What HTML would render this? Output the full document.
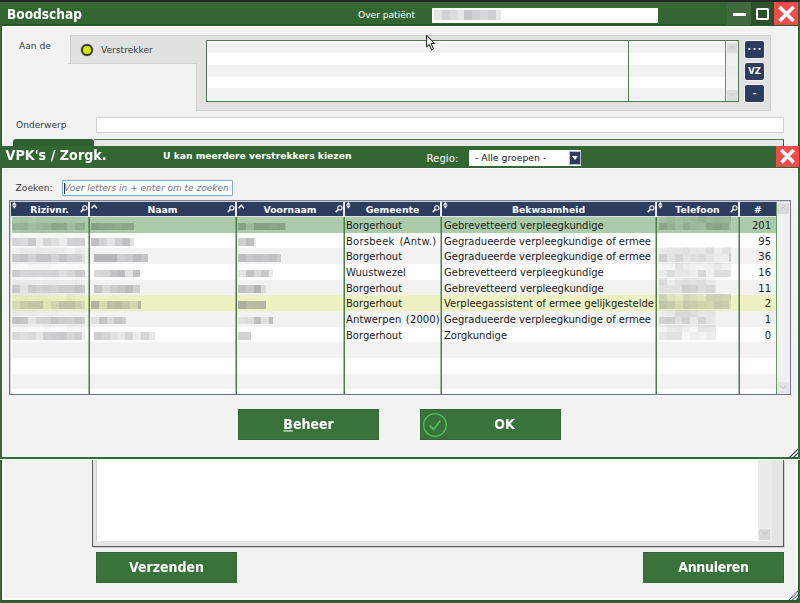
<!DOCTYPE html>
<html><head><meta charset="utf-8"><title>Boodschap</title>
<style>
*{box-sizing:border-box;margin:0;padding:0}
html,body{width:800px;height:603px;overflow:hidden;background:#386b38;font-family:"DejaVu Sans","Liberation Sans",sans-serif;font-size:10px;color:#222}
div,svg,span{position:absolute}
.lbl{font-size:9.1px;color:#3a3a3a;line-height:14px;white-space:nowrap}
.btn{background:#39723a;color:#fff;font-weight:bold;font-size:12.6px;text-align:center;border:1px solid #33683a;white-space:nowrap}
.nb{background:#2d3d5f;border-radius:2px;box-shadow:0 0 0 1px #f3f3f3;color:#fff;font-weight:bold;font-size:9px;text-align:center;width:19px;height:17px;line-height:16px}
.th{top:201.5px;height:14.5px;background:#2d3d5f;color:#fff;font-weight:bold;font-size:9.3px;line-height:15.2px;text-align:center;white-space:nowrap}
.td{height:16px;line-height:17px;font-size:10px;color:#1c1c1c;white-space:nowrap;overflow:hidden}
.sep{top:217px;width:2px;height:177px;background:linear-gradient(90deg,rgba(76,124,76,0.5) 0 1px,#4c7c4c 1px 2px)}
.bt{position:static;display:inline-block;transform:scaleY(1.07)}
.bl{filter:blur(0.45px)}
</style></head><body>
<div style="left:0;top:0;width:800px;height:2px;background:#26282a"></div>
<div style="left:0;top:2px;width:800px;height:23px;background:#336633"></div>
<div style="left:7px;top:6px;font-weight:bold;font-size:12.2px;color:#fff;line-height:18px;transform:scaleY(1.08)">Boodschap</div>
<div class="lbl" style="left:358px;top:8px;color:#fff">Over patiënt</div>
<div style="left:432px;top:8px;width:226px;height:15px;background:#fff"></div>
<div class="bl" style="left:434px;top:9.5px;width:67px;height:10.5px;background:linear-gradient(90deg,#e8e4e4 0 8px,#d2d2d6 8px 16px,#dcdce0 16px 24px,#e6e6e6 24px 30px,#c8c6ca 30px 38px,#d0d0d4 38px 46px,#d8d8dc 46px 54px,#cfcfd3 54px 62px,#e6e6ea 62px)"></div>
<div style="left:727px;top:2px;width:24px;height:23px;background:#41693f;z-index:2"></div>
<div style="left:732.5px;top:12.5px;width:13px;height:3px;background:#fff;z-index:3"></div>
<div style="left:751px;top:2px;width:23px;height:23px;background:#2b502b;z-index:2"></div>
<div style="left:756px;top:8px;width:13px;height:12px;border:2px solid #fff;border-radius:1.5px;z-index:3"></div>
<div style="left:774px;top:2px;width:24px;height:23px;background:#f24b4b;z-index:2"></div>
<svg style="left:775px;top:2px;z-index:3" width="22" height="22"><path d="M4.5 5 L18.5 19 M18.5 5 L4.5 19" stroke="#fff" stroke-width="3.6"/></svg>
<div style="left:1px;top:24px;width:798px;height:577.5px;background:#275927"></div>
<div style="left:2px;top:26px;width:796px;height:574px;background:#fff"></div>
<div style="left:4px;top:27px;width:792px;height:571px;background:#f2f2f2"></div>
<div class="lbl" style="left:19px;top:39px">Aan de</div>
<div style="left:70px;top:35px;width:701px;height:75.5px;background:#e1e1e1;border:1px solid #cfcfcf"></div>
<div style="left:68px;top:63px;width:129px;height:49px;background:#f2f2f2;border-top:1px solid #cfcfcf;border-right:1px solid #cfcfcf"></div>
<div style="left:81px;top:44px;width:12px;height:12px;border-radius:50%;background:#d2ee00;border:2px solid #3e3f2a;box-shadow:0 0 1px #55583a"></div>
<div class="lbl" style="left:101px;top:43px">Verstrekker</div>
<div style="left:206px;top:40px;width:533px;height:62px;background:#fff;border:1px solid #4d7d4d"></div>
<div style="left:208px;top:42.5px;width:530px;height:10px;background:#f2f2f2"></div>
<div style="left:208px;top:64.5px;width:530px;height:12px;background:#f2f2f2"></div>
<div style="left:208px;top:88px;width:530px;height:12px;background:#f2f2f2"></div>
<div style="left:628px;top:41px;width:1px;height:60px;background:#4d7d4d"></div>
<div style="left:725px;top:41px;width:1px;height:60px;background:#6a976a"></div>
<div style="left:726px;top:41px;width:12px;height:60px;background:rgba(236,236,236,0.75)"></div>
<div style="left:727px;top:42.5px;width:10px;height:10px;background:#dadada"></div>
<div style="left:727px;top:90px;width:10px;height:10.5px;background:#dcdcdc"></div>
<div class="nb" style="left:745px;top:41px;letter-spacing:1.6px;font-size:5.5px;text-indent:1.6px">•••</div>
<div class="nb" style="left:745px;top:63px;font-size:8.4px">VZ</div>
<div class="nb" style="left:745px;top:85px">-</div>
<div class="lbl" style="left:16px;top:118px">Onderwerp</div>
<div style="left:96px;top:117px;width:688px;height:16px;background:#fff;border:1px solid #d0d0d0"></div>
<div style="left:13px;top:139px;width:81px;height:8px;background:#2f5f30;border-radius:3px 3px 0 0"></div>
<div style="left:94px;top:139px;width:690px;height:8px;background:#e6e9e6;border-top:1px solid #4d7d4d;border-right:1px solid #4a4f4a"></div>
<div style="left:92px;top:455px;width:692px;height:92px;background:#e3e6e3;border:1px solid #5a5a5a;box-shadow:0.5px 0.5px 0 rgba(90,90,90,0.4)"></div>
<div style="left:96px;top:455px;width:662px;height:85.5px;background:#fff;border-left:1px solid #d0d0d0"></div>
<div style="left:758px;top:455px;width:13.5px;height:85.5px;background:#ececec"></div>
<div style="left:759px;top:528.5px;width:11px;height:11px;background:#d9d9d9"></div>
<div class="btn" style="left:96px;top:552px;width:141px;height:31px;line-height:29px"><span class="bt">Verzenden</span></div>
<div class="btn" style="left:643px;top:552px;width:141px;height:31px;line-height:29px"><span class="bt" style="letter-spacing:-0.3px">Annuleren</span></div>
<div style="left:0;top:146px;width:800px;height:314px;background:#fff"></div>
<div style="left:0;top:146px;width:800px;height:313px;background:#35693a"></div>
<div style="left:0;top:146px;width:800px;height:21.5px;background:#336633"></div>
<div style="left:1.6px;top:168px;width:796.8px;height:289px;background:#fff"></div>
<div style="left:3px;top:169px;width:794px;height:287px;background:#f2f2f2"></div>
<div style="left:5.5px;top:148px;font-weight:bold;font-size:12.8px;color:#fff;line-height:16px;transform:scaleY(1.12);white-space:nowrap">VPK's / Zorgk.</div>
<div style="left:163px;top:149px;font-weight:bold;font-size:9.2px;color:#fff;line-height:13px;white-space:nowrap">U kan meerdere verstrekkers kiezen</div>
<div class="lbl" style="left:426.5px;top:152px;color:#fff;font-size:10.2px">Regio:</div>
<div style="left:469px;top:150px;width:112px;height:16px;background:#fff"></div>
<div style="left:475px;top:151px;font-size:9.3px;line-height:13px;color:#222;white-space:nowrap">- Alle groepen -</div>
<div style="left:569px;top:151px;width:12px;height:14px;background:#2d3d5f;border:1px solid #b8bfd4"></div>
<div style="left:572px;top:156px;width:0;height:0;border:3px solid transparent;border-top:4px solid #fff"></div>
<div style="left:776px;top:146px;width:23px;height:21px;background:#f24b4b"></div>
<svg style="left:776px;top:146px" width="24" height="22"><path d="M5.3 4.1 L17.7 16.5 M17.7 4.1 L5.3 16.5" stroke="#fff" stroke-width="3.6"/></svg>
<div class="lbl" style="left:15.5px;top:181px;font-size:9.2px">Zoeken:</div>
<div style="left:62px;top:180px;width:171px;height:16px;background:#fff;border:1px solid #7fabe0;border-radius:1px;box-shadow:0 0 1px #9cc0ea"></div>
<div style="left:64px;top:183px;width:1px;height:11px;background:#333"></div>
<div style="left:64px;top:182px;font-size:9px;line-height:13px;font-style:italic;color:#6f7680;white-space:nowrap">Voer letters in + enter om te zoeken</div>
<div style="left:9px;top:200px;width:782px;height:195px;background:#fff;border:1px solid #6a7590;border-top:1.5px solid #7a8296;box-shadow:inset 0 0 0 1px rgba(106,117,144,0.35)"></div>
<div style="left:12px;top:217px;width:764px;height:16px;background:#accbab"></div>
<div style="left:12px;top:233px;width:764px;height:15px;background:#ffffff"></div>
<div style="left:12px;top:248px;width:764px;height:16px;background:#f2f2f2"></div>
<div style="left:12px;top:264px;width:764px;height:16px;background:#ffffff"></div>
<div style="left:12px;top:280px;width:764px;height:15px;background:#f2f2f2"></div>
<div style="left:12px;top:295px;width:764px;height:16px;background:#eef2c2"></div>
<div style="left:12px;top:311px;width:764px;height:16px;background:#f2f2f2"></div>
<div style="left:12px;top:327px;width:764px;height:15px;background:#ffffff"></div>
<div style="left:12px;top:342px;width:764px;height:16px;background:#f2f2f2"></div>
<div style="left:12px;top:358px;width:764px;height:16px;background:#ffffff"></div>
<div style="left:12px;top:374px;width:764px;height:15px;background:#f2f2f2"></div>
<div style="left:12px;top:389px;width:764px;height:5px;background:#ffffff"></div>
<div class="th" style="left:11px;width:77px">Rizivnr.</div>
<svg style="left:12.4px;top:202.4px" width="5" height="7"><path d="M2.3 0 L4.6 2.8 L0 2.8Z M0 3.6 L4.6 3.6 L2.3 6.4Z" fill="#fff"/></svg>
<svg style="left:79.5px;top:205px" width="8" height="8"><circle cx="4.9" cy="2.9" r="2.1" stroke="#fff" stroke-width="1.1" fill="none"/><path d="M3.3 4.5 L0.7 7.1" stroke="#fff" stroke-width="1.5"/></svg>
<div class="th" style="left:90px;width:145px">Naam</div>
<svg style="left:91.2px;top:204.3px" width="8" height="6"><path d="M0.6 4.2 L3.3 1.2 L6 4.2" stroke="#fff" stroke-width="1.3" fill="none"/></svg>
<svg style="left:226.5px;top:205px" width="8" height="8"><circle cx="4.9" cy="2.9" r="2.1" stroke="#fff" stroke-width="1.1" fill="none"/><path d="M3.3 4.5 L0.7 7.1" stroke="#fff" stroke-width="1.5"/></svg>
<div class="th" style="left:237px;width:106px">Voornaam</div>
<svg style="left:238.2px;top:204.3px" width="8" height="6"><path d="M0.6 4.2 L3.3 1.2 L6 4.2" stroke="#fff" stroke-width="1.3" fill="none"/></svg>
<svg style="left:334.5px;top:205px" width="8" height="8"><circle cx="4.9" cy="2.9" r="2.1" stroke="#fff" stroke-width="1.1" fill="none"/><path d="M3.3 4.5 L0.7 7.1" stroke="#fff" stroke-width="1.5"/></svg>
<div class="th" style="left:345px;width:95px">Gemeente</div>
<svg style="left:346.4px;top:202.4px" width="5" height="7"><path d="M2.3 0 L4.6 2.8 L0 2.8Z M0 3.6 L4.6 3.6 L2.3 6.4Z" fill="#fff"/></svg>
<svg style="left:431.5px;top:205px" width="8" height="8"><circle cx="4.9" cy="2.9" r="2.1" stroke="#fff" stroke-width="1.1" fill="none"/><path d="M3.3 4.5 L0.7 7.1" stroke="#fff" stroke-width="1.5"/></svg>
<div class="th" style="left:442px;width:213px">Bekwaamheid</div>
<svg style="left:443.4px;top:202.4px" width="5" height="7"><path d="M2.3 0 L4.6 2.8 L0 2.8Z M0 3.6 L4.6 3.6 L2.3 6.4Z" fill="#fff"/></svg>
<svg style="left:646.5px;top:205px" width="8" height="8"><circle cx="4.9" cy="2.9" r="2.1" stroke="#fff" stroke-width="1.1" fill="none"/><path d="M3.3 4.5 L0.7 7.1" stroke="#fff" stroke-width="1.5"/></svg>
<div class="th" style="left:657px;width:81px">Telefoon</div>
<svg style="left:658.4px;top:202.4px" width="5" height="7"><path d="M2.3 0 L4.6 2.8 L0 2.8Z M0 3.6 L4.6 3.6 L2.3 6.4Z" fill="#fff"/></svg>
<svg style="left:729.5px;top:205px" width="8" height="8"><circle cx="4.9" cy="2.9" r="2.1" stroke="#fff" stroke-width="1.1" fill="none"/><path d="M3.3 4.5 L0.7 7.1" stroke="#fff" stroke-width="1.5"/></svg>
<div class="th" style="left:740px;width:36px">#</div>
<div style="left:88px;top:201.5px;width:2px;height:14.5px;background:#e8ebf0"></div><div class="sep" style="left:88px"></div>
<div style="left:235px;top:201.5px;width:2px;height:14.5px;background:#e8ebf0"></div><div class="sep" style="left:235px"></div>
<div style="left:343px;top:201.5px;width:2px;height:14.5px;background:#e8ebf0"></div><div class="sep" style="left:343px"></div>
<div style="left:440px;top:201.5px;width:2px;height:14.5px;background:#e8ebf0"></div><div class="sep" style="left:440px"></div>
<div style="left:655px;top:201.5px;width:2px;height:14.5px;background:#e8ebf0"></div><div class="sep" style="left:655px"></div>
<div style="left:738px;top:201.5px;width:2px;height:14.5px;background:#e8ebf0"></div><div class="sep" style="left:738px"></div>
<div style="left:11px;top:216px;width:765px;height:1px;background:#dfe3e8"></div>
<div style="left:776px;top:202px;width:14px;height:192px;background:#f0f0f0;border-left:1px solid #6a976a"></div>
<div style="left:777px;top:203px;width:12px;height:11px;background:#dadada"></div>
<div style="left:777px;top:382px;width:12px;height:11px;background:#e4e4e4"></div>
<svg style="left:780px;top:206px" width="6" height="5"><path d="M0.5 3.5 L3 1 L5.5 3.5" stroke="#c4c4c4" stroke-width="1" fill="none"/></svg><svg style="left:780px;top:385px" width="6" height="5"><path d="M0.5 1 L3 3.5 L5.5 1" stroke="#c4c4c4" stroke-width="1" fill="none"/></svg><svg style="left:729px;top:45px" width="6" height="5"><path d="M0.5 3.5 L3 1 L5.5 3.5" stroke="#c4c4c4" stroke-width="1" fill="none"/></svg><svg style="left:729px;top:92px" width="6" height="5"><path d="M0.5 1 L3 3.5 L5.5 1" stroke="#c4c4c4" stroke-width="1" fill="none"/></svg><svg style="left:762px;top:531px" width="6" height="5"><path d="M0.5 1 L3 3.5 L5.5 1" stroke="#c4c4c4" stroke-width="1" fill="none"/></svg>
<div class="td" style="left:346px;top:217px;width:95px">Borgerhout</div><div class="td" style="left:444px;top:217px;width:211px">Gebrevetteerd verpleegkundige</div><div class="td" style="left:741px;top:217px;width:30px;text-align:right">201</div>
<div class="bl" style="left:12.3px;top:222.6px;width:73.2px;height:7.8px;background:linear-gradient(90deg,rgba(100,122,100,0.29) 0.0px 7.8px,rgba(100,122,100,0.31) 7.8px 15.6px,rgba(100,122,100,0.16) 15.6px 23.5px,rgba(100,122,100,0.24) 23.5px 31.3px,rgba(100,122,100,0.29) 31.3px 39.1px,rgba(100,122,100,0.44) 39.1px 46.9px,rgba(100,122,100,0.41) 46.9px 54.7px,rgba(100,122,100,0.17) 54.7px 62.6px,rgba(100,122,100,0.37) 62.6px 70.4px,rgba(100,122,100,0.34) 70.4px 78.2px)"></div><div class="bl" style="left:12.3px;top:214.8px;width:73.2px;height:7.8px;background:linear-gradient(90deg,rgba(100,122,100,0.03) 0.0px 7.8px,rgba(100,122,100,0.08) 7.8px 15.6px,rgba(100,122,100,0.02) 15.6px 23.5px,rgba(100,122,100,0.08) 23.5px 31.3px,rgba(100,122,100,0.07) 31.3px 39.1px,rgba(100,122,100,0.07) 39.1px 46.9px,rgba(100,122,100,0.05) 46.9px 54.7px,rgba(100,122,100,0.06) 54.7px 62.6px,rgba(100,122,100,0.04) 62.6px 70.4px,rgba(100,122,100,0.04) 70.4px 78.2px)"></div><div class="bl" style="left:90.5px;top:222.6px;width:43.0px;height:7.8px;background:linear-gradient(90deg,rgba(100,122,100,0.54) 0.0px 7.8px,rgba(100,122,100,0.46) 7.8px 15.6px,rgba(100,122,100,0.43) 15.6px 23.5px,rgba(100,122,100,0.39) 23.5px 31.3px,rgba(100,122,100,0.45) 31.3px 39.1px,rgba(100,122,100,0.47) 39.1px 46.9px)"></div><div class="bl" style="left:238.1px;top:222.6px;width:47.7px;height:7.8px;background:linear-gradient(90deg,rgba(100,122,100,0.51) 0.0px 7.8px,rgba(100,122,100,0.21) 7.8px 15.6px,rgba(100,122,100,0.52) 15.6px 23.5px,rgba(100,122,100,0.53) 23.5px 31.3px,rgba(100,122,100,0.48) 31.3px 39.1px,rgba(100,122,100,0.51) 39.1px 46.9px,rgba(100,122,100,0.17) 46.9px 54.7px)"></div><div class="bl" style="left:658.8px;top:222.6px;width:72.2px;height:7.8px;background:linear-gradient(90deg,rgba(100,122,100,0.47) 0.0px 7.8px,rgba(100,122,100,0.32) 7.8px 15.6px,rgba(100,122,100,0.17) 15.6px 23.5px,rgba(100,122,100,0.36) 23.5px 31.3px,rgba(100,122,100,0.21) 31.3px 39.1px,rgba(100,122,100,0.19) 39.1px 46.9px,rgba(100,122,100,0.44) 46.9px 54.7px,rgba(100,122,100,0.48) 54.7px 62.6px,rgba(100,122,100,0.40) 62.6px 70.4px,rgba(100,122,100,0.16) 70.4px 78.2px)"></div><div class="bl" style="left:658.8px;top:215.6px;width:72.2px;height:7.0px;background:linear-gradient(90deg,rgba(100,122,100,0.13) 0.0px 7.8px,rgba(100,122,100,0.21) 7.8px 15.6px,rgba(100,122,100,0.13) 15.6px 23.5px,rgba(100,122,100,0.19) 23.5px 31.3px,rgba(100,122,100,0.23) 31.3px 39.1px,rgba(100,122,100,0.33) 39.1px 46.9px,rgba(100,122,100,0.26) 46.9px 54.7px,rgba(100,122,100,0.29) 54.7px 62.6px,rgba(100,122,100,0.28) 62.6px 70.4px,rgba(100,122,100,0.34) 70.4px 78.2px)"></div>
<div class="td" style="left:346px;top:233px;width:95px;word-spacing:1.5px;letter-spacing:0.23px">Borsbeek (Antw.)</div><div class="td" style="left:444px;top:233px;width:211px">Gegradueerde verpleegkundige of ermee</div><div class="td" style="left:741px;top:233px;width:30px;text-align:right">95</div>
<div class="bl" style="left:12.3px;top:238.2px;width:73.2px;height:7.8px;background:linear-gradient(90deg,rgba(118,118,124,0.30) 0.0px 7.8px,rgba(118,118,124,0.27) 7.8px 15.6px,rgba(118,118,124,0.40) 15.6px 23.5px,rgba(118,118,124,0.14) 23.5px 31.3px,rgba(118,118,124,0.30) 31.3px 39.1px,rgba(118,118,124,0.23) 39.1px 46.9px,rgba(118,118,124,0.15) 46.9px 54.7px,rgba(118,118,124,0.33) 54.7px 62.6px,rgba(118,118,124,0.34) 62.6px 70.4px,rgba(118,118,124,0.35) 70.4px 78.2px)"></div><div class="bl" style="left:12.3px;top:230.4px;width:73.2px;height:7.8px;background:linear-gradient(90deg,rgba(118,118,124,0.01) 0.0px 7.8px,rgba(118,118,124,0.07) 7.8px 15.6px,rgba(118,118,124,0.05) 15.6px 23.5px,rgba(118,118,124,0.07) 23.5px 31.3px,rgba(118,118,124,0.05) 31.3px 39.1px,rgba(118,118,124,0.05) 39.1px 46.9px,rgba(118,118,124,0.05) 46.9px 54.7px,rgba(118,118,124,0.03) 54.7px 62.6px,rgba(118,118,124,0.06) 62.6px 70.4px,rgba(118,118,124,0.05) 70.4px 78.2px)"></div><div class="bl" style="left:90.5px;top:238.2px;width:43.0px;height:7.8px;background:linear-gradient(90deg,rgba(118,118,124,0.46) 0.0px 7.8px,rgba(118,118,124,0.32) 7.8px 15.6px,rgba(118,118,124,0.20) 15.6px 23.5px,rgba(118,118,124,0.35) 23.5px 31.3px,rgba(118,118,124,0.46) 31.3px 39.1px,rgba(118,118,124,0.21) 39.1px 46.9px)"></div><div class="bl" style="left:238.1px;top:238.2px;width:17.7px;height:7.8px;background:linear-gradient(90deg,rgba(118,118,124,0.35) 0.0px 7.8px,rgba(118,118,124,0.47) 7.8px 15.6px,rgba(118,118,124,0.15) 15.6px 23.5px)"></div>
<div class="td" style="left:346px;top:248px;width:95px">Borgerhout</div><div class="td" style="left:444px;top:248px;width:211px">Gegradueerde verpleegkundige of ermee</div><div class="td" style="left:741px;top:248px;width:30px;text-align:right">36</div>
<div class="bl" style="left:12.3px;top:253.9px;width:73.2px;height:7.8px;background:linear-gradient(90deg,rgba(118,118,124,0.32) 0.0px 7.8px,rgba(118,118,124,0.37) 7.8px 15.6px,rgba(118,118,124,0.26) 15.6px 23.5px,rgba(118,118,124,0.37) 23.5px 31.3px,rgba(118,118,124,0.37) 31.3px 39.1px,rgba(118,118,124,0.25) 39.1px 46.9px,rgba(118,118,124,0.36) 46.9px 54.7px,rgba(118,118,124,0.28) 54.7px 62.6px,rgba(118,118,124,0.30) 62.6px 70.4px,rgba(118,118,124,0.17) 70.4px 78.2px)"></div><div class="bl" style="left:12.3px;top:246.1px;width:73.2px;height:7.8px;background:linear-gradient(90deg,rgba(118,118,124,0.03) 0.0px 7.8px,rgba(118,118,124,0.08) 7.8px 15.6px,rgba(118,118,124,0.06) 15.6px 23.5px,rgba(118,118,124,0.09) 23.5px 31.3px,rgba(118,118,124,0.07) 31.3px 39.1px,rgba(118,118,124,0.07) 39.1px 46.9px,rgba(118,118,124,0.05) 46.9px 54.7px,rgba(118,118,124,0.02) 54.7px 62.6px,rgba(118,118,124,0.07) 62.6px 70.4px,rgba(118,118,124,0.04) 70.4px 78.2px)"></div><div class="bl" style="left:94.4px;top:253.9px;width:54.1px;height:7.8px;background:linear-gradient(90deg,rgba(118,118,124,0.48) 0.0px 7.8px,rgba(118,118,124,0.48) 7.8px 15.6px,rgba(118,118,124,0.48) 15.6px 23.5px,rgba(118,118,124,0.28) 23.5px 31.3px,rgba(118,118,124,0.32) 31.3px 39.1px,rgba(118,118,124,0.43) 39.1px 46.9px,rgba(118,118,124,0.37) 46.9px 54.7px)"></div><div class="bl" style="left:238.1px;top:253.9px;width:42.7px;height:7.8px;background:linear-gradient(90deg,rgba(118,118,124,0.41) 0.0px 7.8px,rgba(118,118,124,0.34) 7.8px 15.6px,rgba(118,118,124,0.38) 15.6px 23.5px,rgba(118,118,124,0.36) 23.5px 31.3px,rgba(118,118,124,0.40) 31.3px 39.1px,rgba(118,118,124,0.32) 39.1px 46.9px)"></div><div class="bl" style="left:658.8px;top:253.9px;width:72.2px;height:7.8px;background:linear-gradient(90deg,rgba(118,118,124,0.28) 0.0px 7.8px,rgba(118,118,124,0.12) 7.8px 15.6px,rgba(118,118,124,0.23) 15.6px 23.5px,rgba(118,118,124,0.11) 23.5px 31.3px,rgba(118,118,124,0.15) 31.3px 39.1px,rgba(118,118,124,0.18) 39.1px 46.9px,rgba(118,118,124,0.11) 46.9px 54.7px,rgba(118,118,124,0.05) 54.7px 62.6px,rgba(118,118,124,0.06) 62.6px 70.4px,rgba(118,118,124,0.29) 70.4px 78.2px)"></div><div class="bl" style="left:658.8px;top:246.9px;width:72.2px;height:7.0px;background:linear-gradient(90deg,rgba(118,118,124,0.07) 0.0px 7.8px,rgba(118,118,124,0.11) 7.8px 15.6px,rgba(118,118,124,0.11) 15.6px 23.5px,rgba(118,118,124,0.15) 23.5px 31.3px,rgba(118,118,124,0.09) 31.3px 39.1px,rgba(118,118,124,0.08) 39.1px 46.9px,rgba(118,118,124,0.17) 46.9px 54.7px,rgba(118,118,124,0.03) 54.7px 62.6px,rgba(118,118,124,0.12) 62.6px 70.4px,rgba(118,118,124,0.18) 70.4px 78.2px)"></div>
<div class="td" style="left:346px;top:264px;width:95px">Wuustwezel</div><div class="td" style="left:444px;top:264px;width:211px">Gebrevetteerd verpleegkundige</div><div class="td" style="left:741px;top:264px;width:30px;text-align:right">16</div>
<div class="bl" style="left:12.3px;top:269.6px;width:73.2px;height:7.8px;background:linear-gradient(90deg,rgba(118,118,124,0.37) 0.0px 7.8px,rgba(118,118,124,0.30) 7.8px 15.6px,rgba(118,118,124,0.31) 15.6px 23.5px,rgba(118,118,124,0.30) 23.5px 31.3px,rgba(118,118,124,0.31) 31.3px 39.1px,rgba(118,118,124,0.32) 39.1px 46.9px,rgba(118,118,124,0.24) 46.9px 54.7px,rgba(118,118,124,0.30) 54.7px 62.6px,rgba(118,118,124,0.39) 62.6px 70.4px,rgba(118,118,124,0.38) 70.4px 78.2px)"></div><div class="bl" style="left:12.3px;top:261.8px;width:73.2px;height:7.8px;background:linear-gradient(90deg,rgba(118,118,124,0.05) 0.0px 7.8px,rgba(118,118,124,0.04) 7.8px 15.6px,rgba(118,118,124,0.07) 15.6px 23.5px,rgba(118,118,124,0.08) 23.5px 31.3px,rgba(118,118,124,0.07) 31.3px 39.1px,rgba(118,118,124,0.04) 39.1px 46.9px,rgba(118,118,124,0.01) 46.9px 54.7px,rgba(118,118,124,0.03) 54.7px 62.6px,rgba(118,118,124,0.02) 62.6px 70.4px,rgba(118,118,124,0.04) 70.4px 78.2px)"></div><div class="bl" style="left:94.4px;top:269.6px;width:46.1px;height:7.8px;background:linear-gradient(90deg,rgba(118,118,124,0.29) 0.0px 7.8px,rgba(118,118,124,0.31) 7.8px 15.6px,rgba(118,118,124,0.43) 15.6px 23.5px,rgba(118,118,124,0.49) 23.5px 31.3px,rgba(118,118,124,0.21) 31.3px 39.1px,rgba(118,118,124,0.45) 39.1px 46.9px)"></div><div class="bl" style="left:238.1px;top:269.6px;width:34.7px;height:7.8px;background:linear-gradient(90deg,rgba(118,118,124,0.20) 0.0px 7.8px,rgba(118,118,124,0.44) 7.8px 15.6px,rgba(118,118,124,0.29) 15.6px 23.5px,rgba(118,118,124,0.40) 23.5px 31.3px,rgba(118,118,124,0.15) 31.3px 39.1px)"></div><div class="bl" style="left:658.8px;top:269.6px;width:72.2px;height:7.8px;background:linear-gradient(90deg,rgba(118,118,124,0.15) 0.0px 7.8px,rgba(118,118,124,0.25) 7.8px 15.6px,rgba(118,118,124,0.17) 15.6px 23.5px,rgba(118,118,124,0.17) 23.5px 31.3px,rgba(118,118,124,0.12) 31.3px 39.1px,rgba(118,118,124,0.29) 39.1px 46.9px,rgba(118,118,124,0.11) 46.9px 54.7px,rgba(118,118,124,0.24) 54.7px 62.6px,rgba(118,118,124,0.23) 62.6px 70.4px,rgba(118,118,124,0.20) 70.4px 78.2px)"></div><div class="bl" style="left:658.8px;top:262.6px;width:72.2px;height:7.0px;background:linear-gradient(90deg,rgba(118,118,124,0.09) 0.0px 7.8px,rgba(118,118,124,0.07) 7.8px 15.6px,rgba(118,118,124,0.20) 15.6px 23.5px,rgba(118,118,124,0.13) 23.5px 31.3px,rgba(118,118,124,0.09) 31.3px 39.1px,rgba(118,118,124,0.09) 39.1px 46.9px,rgba(118,118,124,0.11) 46.9px 54.7px,rgba(118,118,124,0.16) 54.7px 62.6px,rgba(118,118,124,0.10) 62.6px 70.4px,rgba(118,118,124,0.12) 70.4px 78.2px)"></div>
<div class="td" style="left:346px;top:280px;width:95px">Borgerhout</div><div class="td" style="left:444px;top:280px;width:211px">Gebrevetteerd verpleegkundige</div><div class="td" style="left:741px;top:280px;width:30px;text-align:right">11</div>
<div class="bl" style="left:12.3px;top:285.2px;width:73.2px;height:7.8px;background:linear-gradient(90deg,rgba(118,118,124,0.33) 0.0px 7.8px,rgba(118,118,124,0.12) 7.8px 15.6px,rgba(118,118,124,0.31) 15.6px 23.5px,rgba(118,118,124,0.25) 23.5px 31.3px,rgba(118,118,124,0.28) 31.3px 39.1px,rgba(118,118,124,0.25) 39.1px 46.9px,rgba(118,118,124,0.31) 46.9px 54.7px,rgba(118,118,124,0.31) 54.7px 62.6px,rgba(118,118,124,0.37) 62.6px 70.4px,rgba(118,118,124,0.31) 70.4px 78.2px)"></div><div class="bl" style="left:12.3px;top:277.4px;width:73.2px;height:7.8px;background:linear-gradient(90deg,rgba(118,118,124,0.08) 0.0px 7.8px,rgba(118,118,124,0.07) 7.8px 15.6px,rgba(118,118,124,0.06) 15.6px 23.5px,rgba(118,118,124,0.04) 23.5px 31.3px,rgba(118,118,124,0.07) 31.3px 39.1px,rgba(118,118,124,0.08) 39.1px 46.9px,rgba(118,118,124,0.04) 46.9px 54.7px,rgba(118,118,124,0.04) 54.7px 62.6px,rgba(118,118,124,0.08) 62.6px 70.4px,rgba(118,118,124,0.05) 70.4px 78.2px)"></div><div class="bl" style="left:94.4px;top:285.2px;width:46.1px;height:7.8px;background:linear-gradient(90deg,rgba(118,118,124,0.35) 0.0px 7.8px,rgba(118,118,124,0.20) 7.8px 15.6px,rgba(118,118,124,0.30) 15.6px 23.5px,rgba(118,118,124,0.34) 23.5px 31.3px,rgba(118,118,124,0.41) 31.3px 39.1px,rgba(118,118,124,0.28) 39.1px 46.9px)"></div><div class="bl" style="left:238.1px;top:285.2px;width:27.7px;height:7.8px;background:linear-gradient(90deg,rgba(118,118,124,0.38) 0.0px 7.8px,rgba(118,118,124,0.33) 7.8px 15.6px,rgba(118,118,124,0.49) 15.6px 23.5px,rgba(118,118,124,0.18) 23.5px 31.3px)"></div><div class="bl" style="left:658.8px;top:285.2px;width:57.2px;height:7.8px;background:linear-gradient(90deg,rgba(118,118,124,0.15) 0.0px 7.8px,rgba(118,118,124,0.12) 7.8px 15.6px,rgba(118,118,124,0.13) 15.6px 23.5px,rgba(118,118,124,0.29) 23.5px 31.3px,rgba(118,118,124,0.25) 31.3px 39.1px,rgba(118,118,124,0.16) 39.1px 46.9px,rgba(118,118,124,0.23) 46.9px 54.7px,rgba(118,118,124,0.15) 54.7px 62.6px)"></div><div class="bl" style="left:658.8px;top:278.2px;width:57.2px;height:7.0px;background:linear-gradient(90deg,rgba(118,118,124,0.20) 0.0px 7.8px,rgba(118,118,124,0.06) 7.8px 15.6px,rgba(118,118,124,0.13) 15.6px 23.5px,rgba(118,118,124,0.17) 23.5px 31.3px,rgba(118,118,124,0.14) 31.3px 39.1px,rgba(118,118,124,0.16) 39.1px 46.9px,rgba(118,118,124,0.09) 46.9px 54.7px,rgba(118,118,124,0.07) 54.7px 62.6px)"></div>
<div class="td" style="left:346px;top:295px;width:95px">Borgerhout</div><div class="td" style="left:444px;top:295px;width:211px">Verpleegassistent of ermee gelijkgestelde</div><div class="td" style="left:741px;top:295px;width:30px;text-align:right">2</div>
<div class="bl" style="left:12.3px;top:300.9px;width:73.2px;height:7.8px;background:linear-gradient(90deg,rgba(118,118,124,0.19) 0.0px 7.8px,rgba(118,118,124,0.31) 7.8px 15.6px,rgba(118,118,124,0.36) 15.6px 23.5px,rgba(118,118,124,0.37) 23.5px 31.3px,rgba(118,118,124,0.14) 31.3px 39.1px,rgba(118,118,124,0.25) 39.1px 46.9px,rgba(118,118,124,0.39) 46.9px 54.7px,rgba(118,118,124,0.39) 54.7px 62.6px,rgba(118,118,124,0.29) 62.6px 70.4px,rgba(118,118,124,0.19) 70.4px 78.2px)"></div><div class="bl" style="left:12.3px;top:293.1px;width:73.2px;height:7.8px;background:linear-gradient(90deg,rgba(118,118,124,0.06) 0.0px 7.8px,rgba(118,118,124,0.08) 7.8px 15.6px,rgba(118,118,124,0.05) 15.6px 23.5px,rgba(118,118,124,0.06) 23.5px 31.3px,rgba(118,118,124,0.05) 31.3px 39.1px,rgba(118,118,124,0.04) 39.1px 46.9px,rgba(118,118,124,0.02) 46.9px 54.7px,rgba(118,118,124,0.08) 54.7px 62.6px,rgba(118,118,124,0.04) 62.6px 70.4px,rgba(118,118,124,0.05) 70.4px 78.2px)"></div><div class="bl" style="left:90.5px;top:300.9px;width:50.0px;height:7.8px;background:linear-gradient(90deg,rgba(118,118,124,0.50) 0.0px 7.8px,rgba(118,118,124,0.20) 7.8px 15.6px,rgba(118,118,124,0.40) 15.6px 23.5px,rgba(118,118,124,0.43) 23.5px 31.3px,rgba(118,118,124,0.35) 31.3px 39.1px,rgba(118,118,124,0.22) 39.1px 46.9px,rgba(118,118,124,0.50) 46.9px 54.7px)"></div><div class="bl" style="left:238.1px;top:300.9px;width:27.7px;height:7.8px;background:linear-gradient(90deg,rgba(118,118,124,0.54) 0.0px 7.8px,rgba(118,118,124,0.44) 7.8px 15.6px,rgba(118,118,124,0.46) 15.6px 23.5px,rgba(118,118,124,0.47) 23.5px 31.3px)"></div><div class="bl" style="left:658.8px;top:300.9px;width:72.2px;height:7.8px;background:linear-gradient(90deg,rgba(118,118,124,0.37) 0.0px 7.8px,rgba(118,118,124,0.32) 7.8px 15.6px,rgba(118,118,124,0.20) 15.6px 23.5px,rgba(118,118,124,0.33) 23.5px 31.3px,rgba(118,118,124,0.30) 31.3px 39.1px,rgba(118,118,124,0.24) 39.1px 46.9px,rgba(118,118,124,0.21) 46.9px 54.7px,rgba(118,118,124,0.33) 54.7px 62.6px,rgba(118,118,124,0.31) 62.6px 70.4px,rgba(118,118,124,0.17) 70.4px 78.2px)"></div><div class="bl" style="left:658.8px;top:293.9px;width:72.2px;height:7.0px;background:linear-gradient(90deg,rgba(118,118,124,0.25) 0.0px 7.8px,rgba(118,118,124,0.13) 7.8px 15.6px,rgba(118,118,124,0.07) 15.6px 23.5px,rgba(118,118,124,0.21) 23.5px 31.3px,rgba(118,118,124,0.17) 31.3px 39.1px,rgba(118,118,124,0.10) 39.1px 46.9px,rgba(118,118,124,0.26) 46.9px 54.7px,rgba(118,118,124,0.27) 54.7px 62.6px,rgba(118,118,124,0.24) 62.6px 70.4px,rgba(118,118,124,0.25) 70.4px 78.2px)"></div>
<div class="td" style="left:346px;top:311px;width:95px;word-spacing:1px;letter-spacing:0.13px">Antwerpen (2000)</div><div class="td" style="left:444px;top:311px;width:211px">Gegradueerde verpleegkundige of ermee</div><div class="td" style="left:741px;top:311px;width:30px;text-align:right">1</div>
<div class="bl" style="left:12.3px;top:316.5px;width:73.2px;height:7.8px;background:linear-gradient(90deg,rgba(118,118,124,0.38) 0.0px 7.8px,rgba(118,118,124,0.36) 7.8px 15.6px,rgba(118,118,124,0.11) 15.6px 23.5px,rgba(118,118,124,0.24) 23.5px 31.3px,rgba(118,118,124,0.25) 31.3px 39.1px,rgba(118,118,124,0.35) 39.1px 46.9px,rgba(118,118,124,0.30) 46.9px 54.7px,rgba(118,118,124,0.28) 54.7px 62.6px,rgba(118,118,124,0.36) 62.6px 70.4px,rgba(118,118,124,0.26) 70.4px 78.2px)"></div><div class="bl" style="left:12.3px;top:308.7px;width:73.2px;height:7.8px;background:linear-gradient(90deg,rgba(118,118,124,0.07) 0.0px 7.8px,rgba(118,118,124,0.05) 7.8px 15.6px,rgba(118,118,124,0.07) 15.6px 23.5px,rgba(118,118,124,0.03) 23.5px 31.3px,rgba(118,118,124,0.03) 31.3px 39.1px,rgba(118,118,124,0.06) 39.1px 46.9px,rgba(118,118,124,0.02) 46.9px 54.7px,rgba(118,118,124,0.02) 54.7px 62.6px,rgba(118,118,124,0.01) 62.6px 70.4px,rgba(118,118,124,0.04) 70.4px 78.2px)"></div><div class="bl" style="left:90.5px;top:316.5px;width:35.0px;height:7.8px;background:linear-gradient(90deg,rgba(118,118,124,0.13) 0.0px 7.8px,rgba(118,118,124,0.38) 7.8px 15.6px,rgba(118,118,124,0.20) 15.6px 23.5px,rgba(118,118,124,0.37) 23.5px 31.3px,rgba(118,118,124,0.29) 31.3px 39.1px)"></div><div class="bl" style="left:238.1px;top:316.5px;width:34.7px;height:7.8px;background:linear-gradient(90deg,rgba(118,118,124,0.15) 0.0px 7.8px,rgba(118,118,124,0.17) 7.8px 15.6px,rgba(118,118,124,0.42) 15.6px 23.5px,rgba(118,118,124,0.14) 23.5px 31.3px,rgba(118,118,124,0.44) 31.3px 39.1px)"></div><div class="bl" style="left:658.8px;top:316.5px;width:57.2px;height:7.8px;background:linear-gradient(90deg,rgba(118,118,124,0.26) 0.0px 7.8px,rgba(118,118,124,0.29) 7.8px 15.6px,rgba(118,118,124,0.15) 15.6px 23.5px,rgba(118,118,124,0.26) 23.5px 31.3px,rgba(118,118,124,0.08) 31.3px 39.1px,rgba(118,118,124,0.24) 39.1px 46.9px,rgba(118,118,124,0.10) 46.9px 54.7px,rgba(118,118,124,0.05) 54.7px 62.6px)"></div><div class="bl" style="left:658.8px;top:309.5px;width:57.2px;height:7.0px;background:linear-gradient(90deg,rgba(118,118,124,0.04) 0.0px 7.8px,rgba(118,118,124,0.07) 7.8px 15.6px,rgba(118,118,124,0.20) 15.6px 23.5px,rgba(118,118,124,0.21) 23.5px 31.3px,rgba(118,118,124,0.18) 31.3px 39.1px,rgba(118,118,124,0.09) 39.1px 46.9px,rgba(118,118,124,0.11) 46.9px 54.7px,rgba(118,118,124,0.09) 54.7px 62.6px)"></div>
<div class="td" style="left:346px;top:327px;width:95px">Borgerhout</div><div class="td" style="left:444px;top:327px;width:211px">Zorgkundige</div><div class="td" style="left:741px;top:327px;width:30px;text-align:right">0</div>
<div class="bl" style="left:12.3px;top:332.1px;width:73.2px;height:7.8px;background:linear-gradient(90deg,rgba(118,118,124,0.28) 0.0px 7.8px,rgba(118,118,124,0.24) 7.8px 15.6px,rgba(118,118,124,0.28) 15.6px 23.5px,rgba(118,118,124,0.17) 23.5px 31.3px,rgba(118,118,124,0.35) 31.3px 39.1px,rgba(118,118,124,0.37) 39.1px 46.9px,rgba(118,118,124,0.39) 46.9px 54.7px,rgba(118,118,124,0.30) 54.7px 62.6px,rgba(118,118,124,0.36) 62.6px 70.4px,rgba(118,118,124,0.12) 70.4px 78.2px)"></div><div class="bl" style="left:12.3px;top:324.3px;width:73.2px;height:7.8px;background:linear-gradient(90deg,rgba(118,118,124,0.07) 0.0px 7.8px,rgba(118,118,124,0.07) 7.8px 15.6px,rgba(118,118,124,0.03) 15.6px 23.5px,rgba(118,118,124,0.03) 23.5px 31.3px,rgba(118,118,124,0.06) 31.3px 39.1px,rgba(118,118,124,0.03) 39.1px 46.9px,rgba(118,118,124,0.04) 46.9px 54.7px,rgba(118,118,124,0.07) 54.7px 62.6px,rgba(118,118,124,0.08) 62.6px 70.4px,rgba(118,118,124,0.08) 70.4px 78.2px)"></div><div class="bl" style="left:94.4px;top:332.1px;width:61.1px;height:7.8px;background:linear-gradient(90deg,rgba(118,118,124,0.35) 0.0px 7.8px,rgba(118,118,124,0.30) 7.8px 15.6px,rgba(118,118,124,0.22) 15.6px 23.5px,rgba(118,118,124,0.18) 23.5px 31.3px,rgba(118,118,124,0.30) 31.3px 39.1px,rgba(118,118,124,0.15) 39.1px 46.9px,rgba(118,118,124,0.31) 46.9px 54.7px,rgba(118,118,124,0.18) 54.7px 62.6px)"></div><div class="bl" style="left:238.1px;top:332.1px;width:12.7px;height:7.8px;background:linear-gradient(90deg,rgba(118,118,124,0.33) 0.0px 7.8px,rgba(118,118,124,0.33) 7.8px 15.6px)"></div><div class="bl" style="left:658.8px;top:332.1px;width:57.2px;height:7.8px;background:linear-gradient(90deg,rgba(118,118,124,0.18) 0.0px 7.8px,rgba(118,118,124,0.22) 7.8px 15.6px,rgba(118,118,124,0.21) 15.6px 23.5px,rgba(118,118,124,0.06) 23.5px 31.3px,rgba(118,118,124,0.12) 31.3px 39.1px,rgba(118,118,124,0.10) 39.1px 46.9px,rgba(118,118,124,0.14) 46.9px 54.7px,rgba(118,118,124,0.12) 54.7px 62.6px)"></div><div class="bl" style="left:658.8px;top:325.1px;width:57.2px;height:7.0px;background:linear-gradient(90deg,rgba(118,118,124,0.09) 0.0px 7.8px,rgba(118,118,124,0.15) 7.8px 15.6px,rgba(118,118,124,0.17) 15.6px 23.5px,rgba(118,118,124,0.11) 23.5px 31.3px,rgba(118,118,124,0.06) 31.3px 39.1px,rgba(118,118,124,0.19) 39.1px 46.9px,rgba(118,118,124,0.18) 46.9px 54.7px,rgba(118,118,124,0.14) 54.7px 62.6px)"></div>
<div class="btn" style="left:238px;top:409px;width:141px;height:31px;line-height:29px"><span class="bt"><span style="position:static;text-decoration:underline">B</span>eheer</span></div>
<div class="btn" style="left:420px;top:409px;width:141px;height:31px;line-height:29px;padding-left:28px"><span class="bt">OK</span></div>
<svg style="left:422px;top:412px" width="26" height="26"><circle cx="13" cy="13" r="11.3" stroke="#55b85a" stroke-width="1.4" fill="none"/><path d="M7.5 13.5 L11.5 17.5 L18.5 8.5" stroke="#55b85a" stroke-width="2" fill="none"/></svg>
<svg style="left:789px;top:449px" width="9" height="9"><path d="M0 9 L9 0 M4 9 L9 4" stroke="#2d3d5f" stroke-width="1.2"/></svg>
<svg style="left:789px;top:591px" width="9" height="9"><path d="M0 9 L9 0 M3.5 9 L9 3.5" stroke="#2d3d5f" stroke-width="1.3" stroke-dasharray="1 0.6"/><path d="M6.5 9 L9 6.5 L9 9Z" fill="#3a4a78"/></svg>
<svg style="left:420px;top:30px" width="24" height="26"><path d="M6.6 5.2 L6.6 16.8 L9.3 14.3 L11.6 19.8 L13.4 19 L11.2 13.6 L14.6 13.4 Z" fill="#fff" stroke="#1a1a1a" stroke-width="1" stroke-linejoin="round" style="filter:drop-shadow(0.6px 0.8px 0.6px rgba(0,0,0,0.35))"/></svg>
</body></html>
